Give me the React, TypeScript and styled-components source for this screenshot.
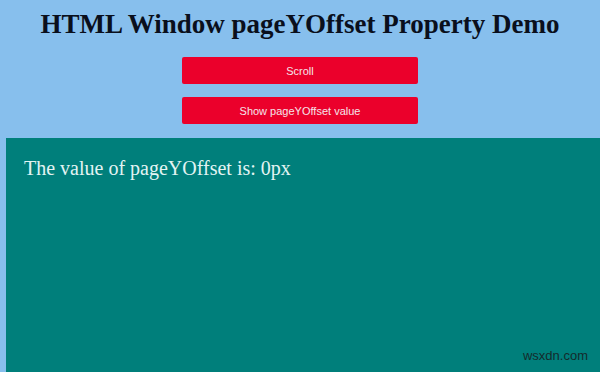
import styled, { createGlobalStyle } from "styled-components";

const GlobalStyle = createGlobalStyle`
	html, body {
		margin: 0;
		padding: 0;
		background-color: #87bfed;
	}
	body {
		width: 600px;
		height: 372px;
		overflow: hidden;
	}
`;

const Page = styled.div`
	display: flex;
	flex-direction: column;
	height: 372px;
	padding-left: 6px;
	position: relative;
`;

const Header = styled.div`
	display: flex;
	flex-direction: column;
	align-items: center;
	padding-top: 8px;
	padding-right: 6px;
`;

const Title = styled.h1`
	margin: 0 0 17px;
	font-family: "Liberation Serif", "Times New Roman", serif;
	font-size: 27px;
	font-weight: bold;
	line-height: 32px;
	color: #0a0f1c;
`;

const Actions = styled.div`
	display: flex;
	flex-direction: column;
	gap: 13px;
	padding-bottom: 14px;
`;

const Button = styled.button`
	width: 236px;
	height: 27px;
	border: none;
	border-radius: 2px;
	background-color: #eb002b;
	color: #f4e4ea;
	font-family: "Liberation Sans", Arial, sans-serif;
	font-size: 11px;
	cursor: pointer;
`;

const Output = styled.div`
	flex: 1;
	background-color: #007f7b;
	padding: 19px 18px;
	font-family: "Liberation Serif", "Times New Roman", serif;
	font-size: 20px;
	color: #e3f4f3;
`;

const Watermark = styled.span`
	position: absolute;
	right: 12px;
	bottom: 9px;
	font-family: "Liberation Sans", Arial, sans-serif;
	font-size: 13px;
	color: #142c2c;
`;

export default function App() {
	return (
		<>
			<GlobalStyle />
			<Page>
				<Header>
					<Title>HTML Window pageYOffset Property Demo</Title>
					<Actions>
						<Button>Scroll</Button>
						<Button>Show pageYOffset value</Button>
					</Actions>
				</Header>
				<Output>The value of pageYOffset is: 0px</Output>
				<Watermark>wsxdn.com</Watermark>
			</Page>
		</>
	);
}
